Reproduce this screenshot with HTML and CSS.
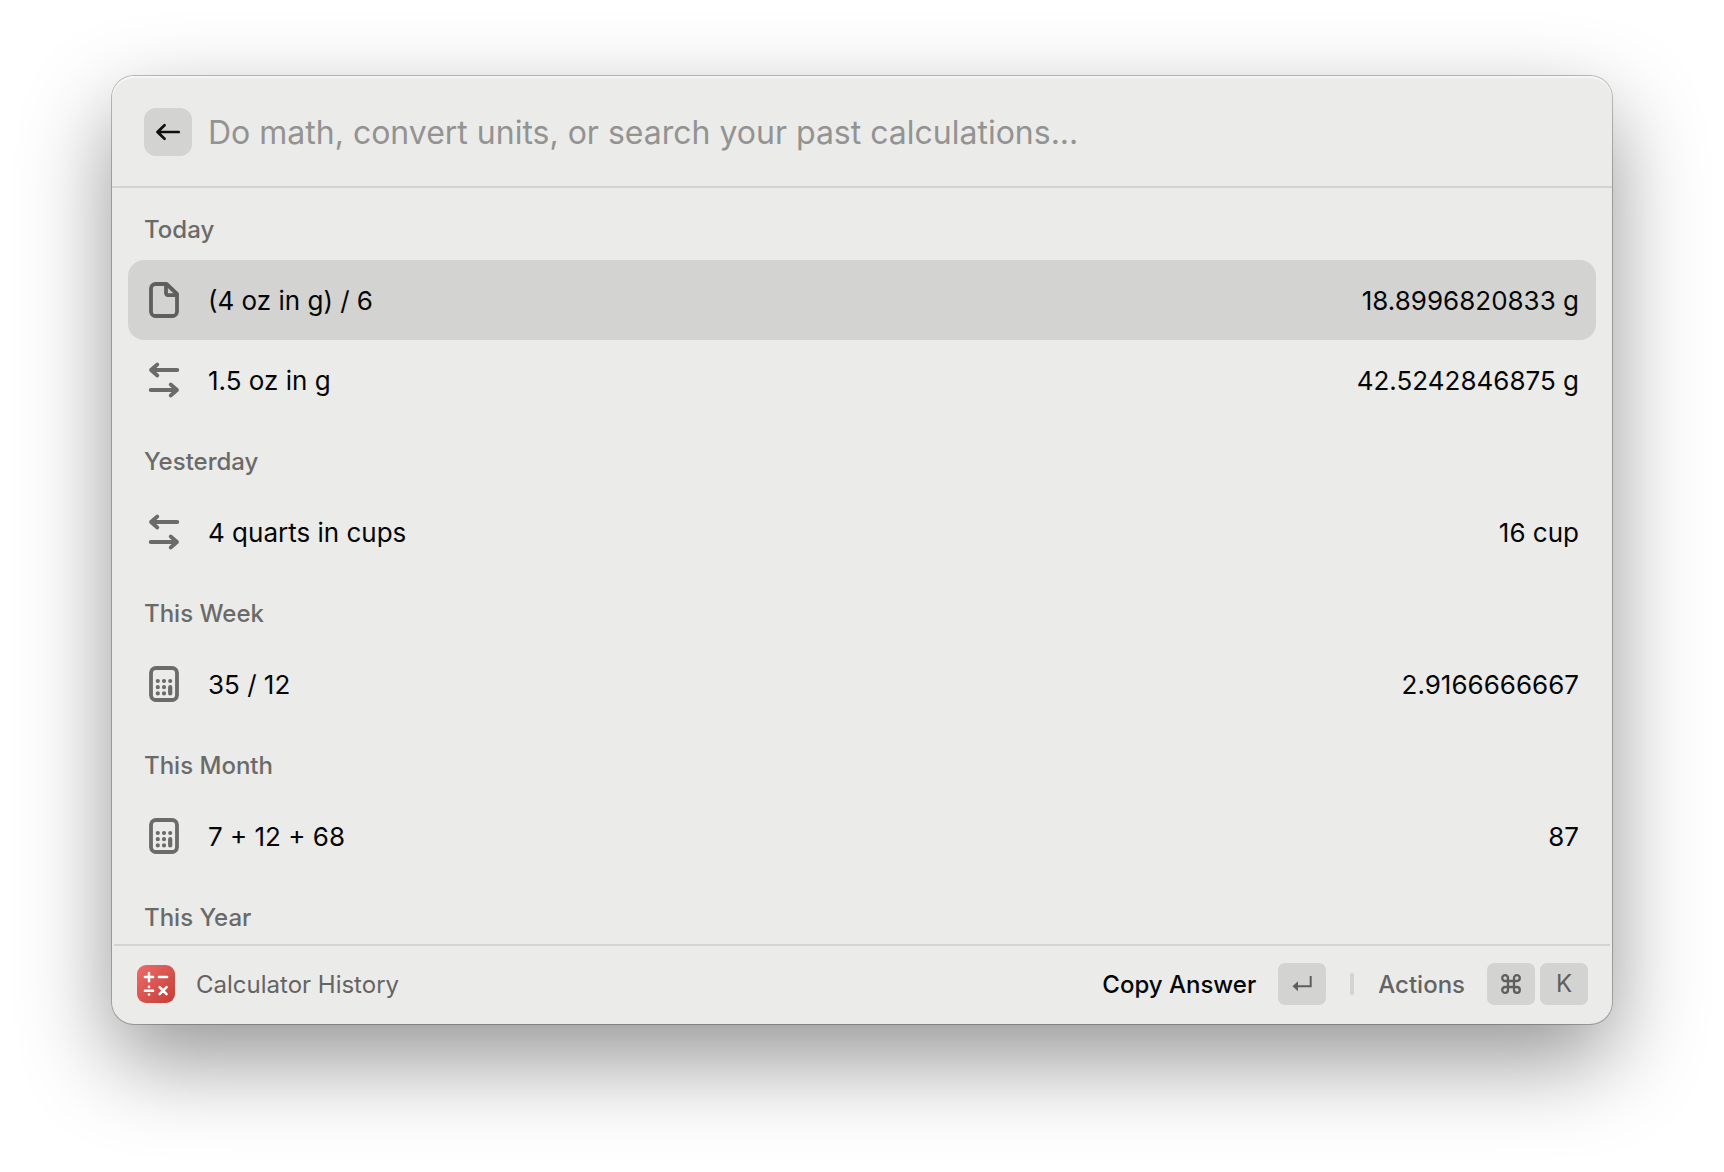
FILE: index.html
```html
<!DOCTYPE html>
<html lang="en">
<head>
<meta charset="utf-8">
<title>Calculator History</title>
<link rel="stylesheet" href="styles.css">
</head>
<body>
<svg class="symbols" aria-hidden="true">
  <symbol id="icon-file" viewBox="0 0 40 40">
    <path d="M11.500 4H22.500L33 14V31.500a4.500 4.500 0 0 1-4.500 4.500h-17A4.500 4.500 0 0 1 7 31.500v-23A4.500 4.500 0 0 1 11.500 4Z"/>
    <path d="M22 5v8a2 2 0 0 0 2 2.200h8"/>
  </symbol>
  <symbol id="icon-swap" viewBox="0 0 40 40">
    <path d="M33.300 10H7M13.300 4.500 7 10l6.300 5.500M6.700 30H33M26.700 24.500 33 30l-6.300 5.500"/>
  </symbol>
  <symbol id="icon-calc" viewBox="0 0 40 40">
    <rect x="7" y="4" width="26" height="32" rx="5"/>
    <path class="dots" d="M13.800 17h.01M20 17h.01M26.200 17h.01M13.800 23.200h.01M20 23.200h.01M13.800 29.400h.01M20 29.400h.01M26.200 23.200v6.200"/>
  </symbol>
</svg>

<main class="window">
  <header class="search">
    <button class="back" type="button" aria-label="Back">
      <svg viewBox="0 0 24 24" aria-hidden="true"><path d="M22.700 12H1.500M8.500 5.300 1.500 12l7 6.700"/></svg>
    </button>
    <input class="query" type="text" aria-label="Search calculations" placeholder="Do math, convert units, or search your past calculations...">
  </header>

  <div class="list">
    <section>
      <h2 class="heading">Today</h2>
      <ul class="rows">
        <li class="row selected"><svg class="icon" aria-hidden="true"><use href="#icon-file"/></svg><span class="expr">(4 oz in g) / 6</span><span class="result">18.8996820833 g</span></li>
        <li class="row"><svg class="icon" aria-hidden="true"><use href="#icon-swap"/></svg><span class="expr">1.5 oz in g</span><span class="result">42.5242846875 g</span></li>
      </ul>
    </section>
    <section>
      <h2 class="heading">Yesterday</h2>
      <ul class="rows">
        <li class="row"><svg class="icon" aria-hidden="true"><use href="#icon-swap"/></svg><span class="expr">4 quarts in cups</span><span class="result">16 cup</span></li>
      </ul>
    </section>
    <section>
      <h2 class="heading">This Week</h2>
      <ul class="rows">
        <li class="row"><svg class="icon" aria-hidden="true"><use href="#icon-calc"/></svg><span class="expr">35 / 12</span><span class="result">2.9166666667</span></li>
      </ul>
    </section>
    <section>
      <h2 class="heading">This Month</h2>
      <ul class="rows">
        <li class="row"><svg class="icon" aria-hidden="true"><use href="#icon-calc"/></svg><span class="expr">7 + 12 + 68</span><span class="result">87</span></li>
      </ul>
    </section>
    <section>
      <h2 class="heading">This Year</h2>
    </section>
  </div>

  <footer class="bar">
    <svg class="app" viewBox="0 0 38 38" aria-hidden="true">
      <defs><linearGradient id="app-red" x1="0" y1="0" x2="1" y2="1"><stop offset="0" stop-color="#ec6c6b"/><stop offset="1" stop-color="#c63c35"/></linearGradient></defs>
      <rect width="38" height="38" rx="9" fill="url(#app-red)"/>
      <path d="M12 8v8.200M7.900 12.100h8.200M21.900 12.100h8.200M7.900 25.700h8.200M22.600 22.200l7 7M29.600 22.200l-7 7"/>
      <circle cx="12" cy="21.900" r="1.300"/><circle cx="12" cy="29.500" r="1.300"/>
    </svg>
    <span class="name">Calculator History</span>
    <button class="action primary" type="button"><span class="label">Copy Answer</span>
      <kbd class="key"><svg class="glyph" viewBox="0 0 20 20" aria-label="Return"><path d="M18.700 2v10.300H5"/><path class="solid" d="M0.500 12.300 6 7.300v10z"/></svg></kbd>
    </button>
    <span class="divider"></span>
    <button class="action" type="button"><span class="label">Actions</span>
      <span class="keys">
        <kbd class="key"><svg class="glyph command" viewBox="0 0 20 20" aria-label="Command"><path d="M7 7V4.200A2.900 2.900 0 1 0 4.100 7h11.800A2.900 2.900 0 1 0 13 4.100v11.800A2.900 2.900 0 1 0 15.900 13H4.100A2.900 2.900 0 1 0 7 15.900Z"/></svg></kbd>
        <kbd class="key">K</kbd>
      </span>
    </button>
  </footer>
</main>
</body>
</html>
```
FILE: styles.css
```css
* {
  box-sizing: border-box;
}

body {
  display: flex;
  height: 100vh;
  margin: 0;
  padding: 76px 112px 148px;
  background: #fff;
  color: #050606;
  font-family: Inter, "Liberation Sans", sans-serif;
  font-size: 26px;
  line-height: 32px;
}

button,
input,
kbd {
  font: inherit;
  color: inherit;
}

button {
  border: 0;
  padding: 0;
  background: none;
}

.symbols {
  position: absolute;
  width: 0;
  height: 0;
}

.window {
  display: flex;
  flex: 1;
  flex-direction: column;
  min-width: 0;
  overflow: hidden;
  border-radius: 22px;
  background: #ebebea;
  box-shadow:
    inset 0 2px 1px #f6f6f6,
    0 0 0 1px rgba(0, 0, 0, 0.24),
    0 36px 90px rgba(0, 0, 0, 0.42);
}

.search {
  display: flex;
  flex: none;
  align-items: center;
  gap: 16px;
  padding: 32px 32px 30px;
  border-bottom: 2px solid #d3d3d2;
}

.back {
  display: grid;
  place-items: center;
  width: 48px;
  height: 48px;
  border-radius: 12px;
  background: #d3d3d2;
}

.back svg {
  width: 24px;
  height: 24px;
  fill: none;
  stroke: #0e0f0f;
  stroke-width: 2.7;
  stroke-linecap: round;
  stroke-linejoin: round;
}

.query {
  flex: 1;
  min-width: 0;
  height: 48px;
  padding: 0;
  border: 0;
  outline: 0;
  background: none;
  font-size: 32px;
}

.query::placeholder {
  color: #939392;
  opacity: 1;
}

.list {
  flex: 1;
  min-height: 0;
  padding: 0 16px;
  overflow-y: auto;
  scrollbar-width: none;
}

.heading {
  margin: 0;
  padding: 26px 16px 14px;
  color: #6a6a69;
  font-size: 24px;
  font-weight: 500;
}

.rows {
  margin: 0;
  padding: 0;
  list-style: none;
}

.row {
  display: flex;
  align-items: center;
  height: 80px;
  padding: 0 17px 0 16px;
  border-radius: 16px;
}

.selected {
  background: #d3d3d2;
}

.icon {
  width: 40px;
  height: 40px;
  margin-right: 24px;
  fill: none;
  stroke: #6b6b6a;
  stroke-width: 3.8;
  stroke-linecap: round;
  stroke-linejoin: round;
}

.selected .icon {
  stroke: #5f5f5e;
}

.dots {
  stroke-width: 4.2;
}

.expr,
.result,
.name,
.label {
  padding-top: 2px;
}

.expr {
  flex: 1;
}

.bar {
  display: flex;
  flex: none;
  align-items: center;
  height: 80px;
  margin: 0 2px;
  padding: 0 22px 2px 23px;
  border-top: 2px solid #d3d3d2;
  color: #646463;
  font-size: 24px;
}

.app {
  width: 38px;
  height: 38px;
  margin-right: 21px;
  fill: #fff;
}

.app path {
  fill: none;
  stroke: #fff;
  stroke-width: 2.5;
  stroke-linecap: round;
}

.name {
  flex: 1;
}

.action {
  display: flex;
  align-items: center;
  gap: 22px;
  font-weight: 500;
}

.primary {
  color: #050606;
}

.keys {
  display: flex;
  gap: 5px;
}

.key {
  display: grid;
  place-items: center;
  width: 48px;
  height: 42px;
  border-radius: 7px;
  background: #d3d3d2;
  color: #5e5e5d;
  font-weight: 400;
}

.glyph {
  width: 20px;
  height: 20px;
  fill: none;
  stroke: currentColor;
  stroke-width: 2;
}

.command {
  stroke-width: 2.3;
}

.solid {
  fill: currentColor;
  stroke: none;
}

.divider {
  width: 4px;
  height: 22px;
  margin: 0 24px;
  border-radius: 2px;
  background: #d3d3d2;
}
```
